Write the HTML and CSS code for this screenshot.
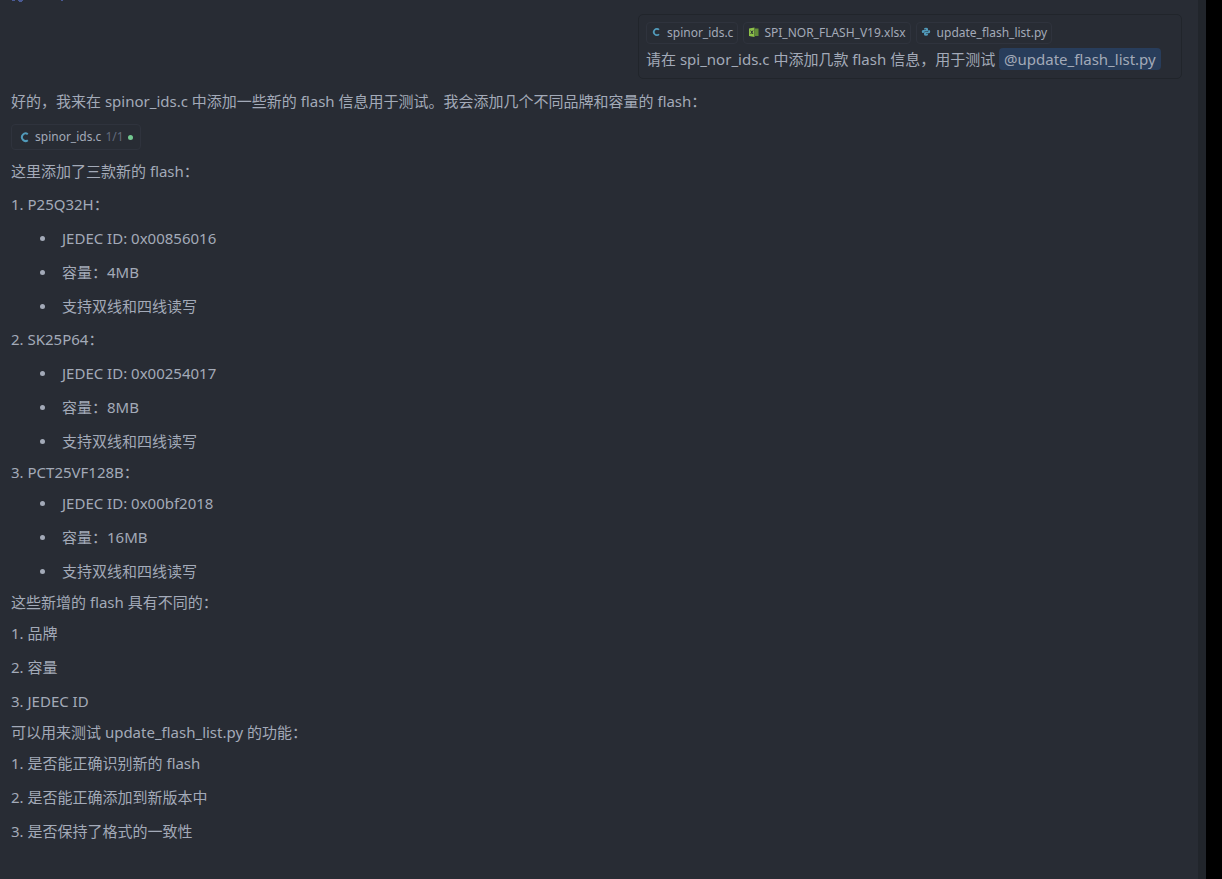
FILE: index.html
```html
<!DOCTYPE html>
<html lang="zh-CN">
<head>
<meta charset="utf-8">
<meta name="viewport" content="width=device-width, initial-scale=1">
<title>Chat</title>
<link rel="stylesheet" href="styles.css">
</head>
<body>
<div class="app">
  <main class="chat">
    <svg class="clipped" viewBox="0 0 64 2" aria-hidden="true"><path d="M1 0h3v1H1zM7 0h5v1H7zM8 1h3v1H8zM50 0h2v1h-2z" fill="#4a5a94"/></svg>
    <section class="prompt">
      <div class="files">
        <button class="file" type="button"><svg class="icon" viewBox="0 0 12 12" aria-hidden="true"><path d="M8 2.800A3 3.200 0 1 0 8 7.200" fill="none" stroke="#519aba" stroke-width="1.700"/></svg>spinor_ids.c</button>
        <button class="file" type="button"><svg class="icon" viewBox="0 0 12 12" aria-hidden="true"><path d="M1 1.500l5.500-1v9.500l-5.500-1z" fill="#8dc149"/><path d="M7 1.500h3.500v7.500H7z" fill="#628c38"/><path d="M2.700 3.500l2.300 3.500M5 3.500L2.700 7" stroke="#282c34" stroke-width="1"/></svg>SPI_NOR_FLASH_V19.xlsx</button>
        <button class="file" type="button"><svg class="icon" viewBox="0 0 12 12" aria-hidden="true"><path d="M3 2Q3 .800 5 .800T7 2V3.500Q7 4.500 6 4.500H4Q2.700 4.500 2.700 6H2Q.800 6 .800 4.500T2 3H5V2.500H3zM7.400 3H8Q9.200 3 9.200 4.500T8 6.200H5V6.700H7V7.500Q7 8.800 5 8.800T3 7.500V6Q3 5 4 5H6Q7.400 5 7.400 3.500z" fill="#519aba"/></svg>update_flash_list.py</button>
      </div>
      <p class="line">请在 spi_nor_ids.c 中添加几款 flash 信息，用于测试 <a class="mention" href="#update_flash_list">@update_flash_list.py</a></p>
    </section>
    <article class="answer">
      <p class="line">好的，我来在 spinor_ids.c 中添加一些新的 flash 信息用于测试。我会添加几个不同品牌和容量的 flash：</p>
      <button class="file edit" type="button"><svg class="icon" viewBox="0 0 12 12" aria-hidden="true"><path d="M8.800 3.200A3.600 3.800 0 1 0 8.800 9.200" fill="none" stroke="#519aba" stroke-width="2"/></svg><span>spinor_ids.c</span><span class="count">1/1</span><span class="dot"></span></button>
      <p class="line">这里添加了三款新的 flash：</p>
      <section class="group">
        <h3 class="line">1. P25Q32H：</h3>
        <ul class="list bullets"><li>JEDEC ID: 0x00856016</li><li>容量：4MB</li><li>支持双线和四线读写</li></ul>
      </section>
      <section class="group">
        <h3 class="line">2. SK25P64：</h3>
        <ul class="list bullets"><li>JEDEC ID: 0x00254017</li><li>容量：8MB</li><li>支持双线和四线读写</li></ul>
      </section>
      <section class="group tight">
        <h3 class="line">3. PCT25VF128B：</h3>
        <ul class="list bullets"><li>JEDEC ID: 0x00bf2018</li><li>容量：16MB</li><li>支持双线和四线读写</li></ul>
      </section>
      <section class="group tight">
        <p class="line">这些新增的 flash 具有不同的：</p>
        <ol class="list"><li>1. 品牌</li><li>2. 容量</li><li>3. JEDEC ID</li></ol>
      </section>
      <section class="group tight">
        <p class="line">可以用来测试 update_flash_list.py 的功能：</p>
        <ol class="list"><li>1. 是否能正确识别新的 flash</li><li>2. 是否能正确添加到新版本中</li><li>3. 是否保持了格式的一致性</li></ol>
      </section>
    </article>
  </main>
  <div class="rail"></div>
</div>
</body>
</html>
```
FILE: styles.css
```css
* { box-sizing: border-box; }
body {
  margin: 0;
  background: #282c34;
  color: #a3aab8;
  font-family: "Noto Sans", "Noto Sans CJK SC", sans-serif;
  font-size: 15px;
  line-height: 24px;
}
p, h3, ul, ol { margin: 0; padding: 0; }
h3 { font-size: inherit; font-weight: 400; }
.app { display: flex; min-height: 100vh; }
.chat { flex: 1; min-width: 0; display: flex; flex-direction: column; padding: 0 16px 24px 11px; }
.clipped { width: 64px; height: 2px; margin-bottom: 12px; }
.rail { width: 24px; background: #000; border-left: 8px solid #21252b; }
.prompt {
  align-self: flex-end;
  min-width: min(544px, 100%);
  padding: 7px;
  border: 1px solid #21252b;
  border-radius: 5px;
}
.files { display: flex; flex-wrap: wrap; gap: 5px; margin-bottom: 3px; }
.file {
  display: inline-flex;
  align-items: center;
  gap: 4px;
  height: 22px;
  padding: 0 4px;
  border: 1px solid #2f333d;
  border-radius: 4px;
  background: transparent;
  color: inherit;
  font-family: inherit;
  font-size: 12px;
  line-height: 16px;
}
.icon { width: 12px; height: 12px; }
.mention { padding: 1px 5px; border-radius: 4px; background: #283d5b; color: inherit; text-decoration: none; }
.answer { display: flex; flex-direction: column; align-items: flex-start; gap: 9px; margin-top: 10px; }
.edit { height: 26px; margin-top: 2px; padding: 0 7px; }
.count { color: #636b7c; }
.dot { width: 5px; height: 5px; border-radius: 50%; background: #73c991; }
.group { display: flex; flex-direction: column; gap: 10px; }
.tight { gap: 7px; }
.list { display: flex; flex-direction: column; gap: 10px; list-style: none; }
.bullets { padding-left: 29px; }
.bullets li { display: flex; align-items: center; gap: 17px; }
.bullets li::before { content: ""; width: 5px; height: 5px; border-radius: 50%; background: #a3aab8; }
.group + .tight { margin-top: -2px; }
```
